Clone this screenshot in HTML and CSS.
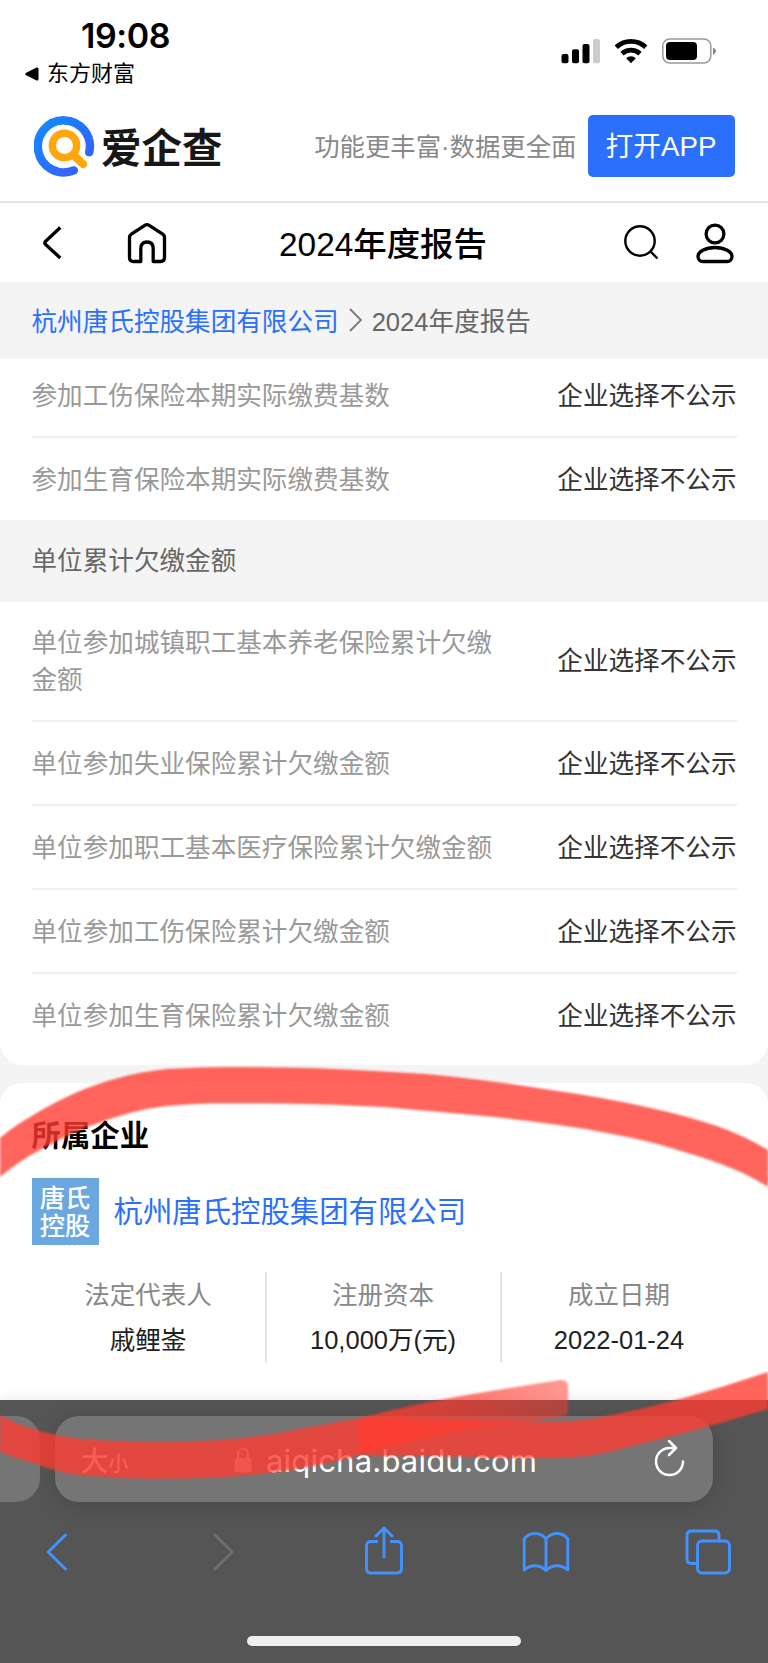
FILE: index.html
```html
<!DOCTYPE html>
<html lang="zh-CN">
<head>
<meta charset="utf-8">
<title>2024年度报告</title>
<link rel="stylesheet" href="styles.css">
</head>
<body>
<div class="screen">
  <div class="status">
    <div class="status-left">
      <div class="time">19:08</div>
      <div class="return"><svg width="14" height="14" viewBox="0 0 14 14"><path d="M1.2 5.7 11.6.6Q13.5 0 13.5 2v10q0 2-1.9 1.4L1.2 8.3Q-.8 7 1.2 5.7z"/></svg><span>东方财富</span></div>
    </div>
    <div class="status-icons">
      <svg width="156" height="28" viewBox="0 0 156 28">
        <rect x="1.5" y="16" width="7" height="9.3" rx="2"/><rect x="12" y="11.3" width="7" height="14" rx="2"/><rect x="22.5" y="6" width="7" height="19.3" rx="2"/><rect x="33" y="1" width="7" height="24.3" rx="2" fill="#ccc"/>
        <g fill="none" stroke="#000" stroke-width="4.8"><path d="M56.3 9.2a21.5 21.5 0 0 1 29.4 0"/><path d="M62 15.6a13.5 13.5 0 0 1 18 0"/></g>
        <path d="M66.2 20.2a7.2 7.2 0 0 1 9.6 0L71 25.2z"/>
        <rect x="102.8" y="1" width="48" height="24" rx="7" fill="none" stroke="#999" stroke-width="1.5"/>
        <rect x="106" y="4" width="31" height="18" rx="4"/><path d="M153 9.5q3 1.2 3 3.7t-3 3.7z" fill="#888"/>
      </svg>
    </div>
  </div>
  <header class="promo">
    <svg class="logo" width="62" height="62" viewBox="0 0 62 62" fill="none" stroke-linecap="round">
      <defs><linearGradient id="ring" x1="0" y1="0" x2="1" y2="1"><stop stop-color="#118bff"/><stop offset="1" stop-color="#3a5bff"/></linearGradient></defs>
      <path d="M55.2 37.2A26 26 0 1 0 39.8 55.4" stroke="url(#ring)" stroke-width="8.5"/>
      <circle cx="30.5" cy="30.5" r="12.2" stroke="#ffa60d" stroke-width="7.4"/><path d="M40.5 41l8.6 8.2" stroke="#ffa60d" stroke-width="8"/>
    </svg>
    <div class="brand">爱企查</div>
    <div class="slogan">功能更丰富·数据更全面</div>
    <div class="open">打开APP</div>
  </header>
  <nav class="nav">
    <svg class="n-back" width="20" height="36" viewBox="0 0 20 36"><path d="M17.3 2.5 2.4 16.5q-1.2 1.4 0 2.8L17.3 33"/></svg>
    <svg class="n-home" width="42" height="42" viewBox="0 0 42 42"><path d="M3.5 15.5q0-2.2 1.8-3.4L18.8 3.3q2.2-1.4 4.4 0l13.5 8.8q1.8 1.2 1.8 3.4v20q0 4-4 4h-7.3V26.5q0-6.5-6.2-6.5t-6.2 6.5v13H7.5q-4 0-4-4z"/></svg>
    <h1>2024年度报告</h1>
    <svg class="n-search" width="38" height="38" viewBox="0 0 38 38"><circle cx="17" cy="17" r="14.7"/><path d="M27.5 27.5l7 7"/></svg>
    <svg class="n-user" width="40" height="42" viewBox="0 0 40 42"><circle cx="20" cy="12" r="8.9"/><path d="M20 25.500c-10 0-17 4.500-17 9 0 3 2 5 5 5h24c3 0 5-2 5-5 0-4.500-7-9-17-9z"/></svg>
  </nav>
  <div class="crumbs"><span class="link">杭州唐氏控股集团有限公司</span><svg width="13" height="24" viewBox="0 0 13 24"><path d="M1 1l11 11L1 23"/></svg><span>2024年度报告</span></div>
  <main>
    <section class="report">
      <div class="row first"><span>参加工伤保险本期实际缴费基数</span><b>企业选择不公示</b></div>
      <div class="row end"><span>参加生育保险本期实际缴费基数</span><b>企业选择不公示</b></div>
      <div class="band">单位累计欠缴金额</div>
      <div class="row tall"><span>单位参加城镇职工基本养老保险累计欠缴金额</span><b>企业选择不公示</b></div>
      <div class="row"><span>单位参加失业保险累计欠缴金额</span><b>企业选择不公示</b></div>
      <div class="row"><span>单位参加职工基本医疗保险累计欠缴金额</span><b>企业选择不公示</b></div>
      <div class="row"><span>单位参加工伤保险累计欠缴金额</span><b>企业选择不公示</b></div>
      <div class="row end"><span>单位参加生育保险累计欠缴金额</span><b>企业选择不公示</b></div>
    </section>
    <section class="company">
      <h2>所属企业</h2>
      <div class="who"><div class="avatar">唐氏<br>控股</div><span>杭州唐氏控股集团有限公司</span></div>
      <div class="facts">
        <div><span>法定代表人</span><b>戚鲤崟</b></div>
        <div><span>注册资本</span><b>10,000万(元)</b></div>
        <div><span>成立日期</span><b>2022-01-24</b></div>
      </div>
    </section>
  </main>
  <footer class="browser">
    <div class="tabs">
      <div class="prev"></div>
      <div class="address">
        <div class="size">大<small>小</small></div>
        <svg class="lock" width="18" height="26" viewBox="0 0 18 26"><rect x=".5" y="11" width="17" height="14.500" rx="2.500" fill="#bbb"/><path d="M4 12V7.500q0-5.500 5-5.500t5 5.500V12" fill="none" stroke="#bbb" stroke-width="2.200"/></svg>
        <div class="url">aiqicha.baidu.com</div>
        <svg class="reload" width="32" height="38" viewBox="0 0 32 38" fill="none" stroke="#fff" stroke-width="2.500" stroke-linecap="round" stroke-linejoin="round"><path d="M29 22.500A13.500 13.500 0 1 1 15.500 9H21.500"/><path d="M15 2l7 7-7 7"/></svg>
      </div>
    </div>
    <div class="tools">
      <svg class="t1" width="22" height="38" viewBox="0 0 22 38"><path d="M19.500 2 2.200 19l17.300 17" stroke-width="3"/></svg>
      <svg class="t2" width="22" height="38" viewBox="0 0 22 38"><path d="M2 2l17.300 17L2 36"/></svg>
      <svg class="t3" width="40" height="50" viewBox="0 0 40 50"><path d="M13 16.500H7q-4.500 0-4.500 4.500v22.500Q2.500 48 7 48h26q4.500 0 4.500-4.500V21q0-4.500-4.500-4.500h-6M20 32V3M12 11l8-8 8 8"/></svg>
      <svg class="t4" width="48" height="42" viewBox="0 0 48 42"><path d="M24 8v31.500M24 8Q20 2.500 13 2.500T2.200 8v31Q7 34.800 13 34.800T24 39.500Q29 34.800 35 34.800T45.800 39V8Q42 2.500 35 2.500T24 8z"/></svg>
      <svg class="t5" width="46" height="46" viewBox="0 0 46 46"><path d="M12 34.500H6.500Q2 34.500 2 30V6.500Q2 2 6.500 2H29.500Q34 2 34 6.500V12"/><rect x="12.500" y="12" width="32" height="32" rx="4.500"/></svg>
    </div>
    <div class="home-bar"></div>
  </footer>
  <svg class="ink" width="768" height="430" viewBox="0 1058 768 430">
    <defs><linearGradient id="fade" gradientUnits="userSpaceOnUse" x1="400" y1="0" x2="570" y2="0"><stop stop-color="#ff3b30" stop-opacity=".79"/><stop offset="1" stop-color="#ff3b30" stop-opacity=".52"/></linearGradient></defs>
    <path fill="#ff3b30" fill-opacity=".79" d="M-4 1141L0 1138Q14 1126 30 1117Q57 1100 87 1088Q108 1080 130 1075Q148 1071 167 1069Q200 1067 233 1067Q310 1067 384 1071.500Q418 1073 451 1076.500Q501 1082 551 1090Q602 1097 651 1108Q687 1116 717 1126Q745 1136 768 1150L772 1152V1190L768 1187Q751 1176 731 1168Q709 1159 684 1152Q651 1141 617 1135Q584 1128 551 1124Q501 1117 451 1113L384 1107Q333 1104 283 1103.500H207Q187 1104 167 1106Q148 1108 130 1113Q108 1119 87 1127Q63 1137 40 1150Q19 1161 0 1177L-4 1180Z"/>
    <path fill="url(#fade)" d="M-4 1413L0 1415Q15 1424 30 1428Q55 1436 80 1439Q118 1442 157 1442Q202 1442 243 1438Q272 1435 300 1429L360 1418Q372 1415 384 1412Q425 1402 467 1395Q515 1387 561 1380Q568 1380 568 1386V1411Q568 1416 560 1417L534 1421L467 1429Q425 1437 384 1448Q359 1456 333 1462Q291 1471 250 1475Q225 1478 200 1478Q177 1479 153 1479Q115 1478 77 1475Q54 1471 33 1463Q15 1458 0 1452L-4 1450Z"/>
    <path fill="#ff3b30" fill-opacity=".79" d="M358 1422Q359 1418 365 1418H384L434 1420Q484 1421 534 1421.500Q553 1422 571 1421Q595 1419 617 1414Q651 1407 684 1398Q727 1386 768 1372L772 1371V1408L768 1409Q726 1422 684 1433L617 1450Q594 1456 571 1457.500Q528 1458.500 484 1457.500L434 1456H384Q368 1456 362 1454Q358 1452 358 1448Z"/>
  </svg>
</div>
</body>
</html>
```
FILE: styles.css
```css
* { box-sizing: border-box; }
body { margin: 0; font-family: "Liberation Sans", "Noto Sans CJK SC", sans-serif; background: #f4f4f4; }
svg { display: block; flex: none; }
h1, h2 { margin: 0; font-weight: 500; }
b { font-weight: 400; }
.screen { position: relative; width: 768px; height: 1663px; overflow: hidden; }
.status { height: 101px; background: #fff; display: flex; justify-content: space-between; padding: 15px 52px 0 25px; }
.time { font: 600 34px/42px Inter, sans-serif; letter-spacing: -.4px; padding-left: 56px; }
.return { display: flex; align-items: center; gap: 8px; height: 34px; font-size: 22px; line-height: 34px; }
.status-icons { padding-top: 23px; }
.promo { height: 102px; background: #fff; border-bottom: 2px solid #e6e6e6; display: flex; align-items: center; padding: 0 33.500px 10px 34px; }
.logo { margin-top: 0; }
.brand { font: 700 40.500px/60px "Noto Sans CJK SC", sans-serif; color: #171717; margin: -1px 0 0 5px; width: 124px; white-space: nowrap; }
.slogan { margin-left: auto; margin-right: 11px; margin-top: -3px; font-size: 25.400px; color: #888; white-space: nowrap; }
.open { width: 147px; height: 62px; border-radius: 5px; background: #2a70fc; color: #fff; font-size: 27.700px; line-height: 64px; text-align: center; white-space: nowrap; }
.nav { height: 79px; background: #fff; display: flex; align-items: center; padding-left: 43px; }
.nav svg { fill: none; stroke: #000; stroke-width: 3.300; stroke-linejoin: round; }
.n-home { margin-left: 63px; }
.nav h1 { font-size: 33.400px; line-height: 50px; margin: 5px 0 0 111px; width: 209px; white-space: nowrap; }
.nav .n-search { margin-left: 135px; stroke-width: 2.400; }
.n-user { margin-left: 33.500px; }
.crumbs { height: 77px; display: flex; align-items: center; padding: 0 0 3px 31.500px; font-size: 25.600px; color: #666; white-space: nowrap; }
.crumbs .link { color: #2a70fc; }
.crumbs svg { margin: 2px 10px 0; fill: none; stroke: #777; stroke-width: 1.800; }
.report { height: 706px; background: #fff; border-radius: 0 0 22px 22px; font-size: 25.600px; line-height: 37.600px; }
.row { height: 84px; margin: 0 31.500px; padding-top: 3px; border-bottom: 2px solid #eee; display: flex; align-items: center; justify-content: space-between; color: #999; }
.row b { color: #333; white-space: nowrap; }
.row span { width: 462px; }
.first { height: 79px; padding: 0 0 2px; }
.end { height: 82px; border: 0; }
.tall { height: 120.500px; }
.band { height: 81.500px; padding-left: 31.500px; background: #f4f4f4; color: #666; line-height: 83px; }
.company { height: 330px; margin-top: 18px; padding: 31px 31.500px 0; background: #fff; border-radius: 22px 22px 0 0; }
.company h2 { height: 44px; font-size: 29.400px; line-height: 44px; font-weight: 700; }
.who { display: flex; align-items: center; gap: 15px; margin-top: 20px; color: #2a70fc; font-size: 29.400px; line-height: 67px; }
.avatar { width: 67px; height: 67px; background: #6ba8e0; color: #fff; font-size: 25.300px; line-height: 28px; text-align: center; padding-top: 6px; font-weight: 500; }
.facts { display: grid; grid-template-columns: repeat(3, 1fr); height: 91px; margin-top: 27px; text-align: center; font-size: 25.500px; }
.facts div { display: flex; flex-direction: column; border-right: 2px solid #e4e4e4; }
.facts div:last-child { border: 0; }
.facts span { color: #888; line-height: 47px; }
.facts b { color: #1f1f1f; line-height: 43px; }
.browser { position: absolute; left: 0; top: 1400px; width: 768px; height: 263px; background: #555; box-shadow: 0 -2px 12px rgba(0,0,0,.08); }
.tabs { display: flex; gap: 15.500px; padding-top: 16px; height: 102px; }
.prev { width: 39.500px; height: 86px; border-radius: 0 24px 24px 0; background: #757575; }
.address { width: 657.500px; height: 86px; border-radius: 24px; background: #757575; box-shadow: 0 3px 20px rgba(0,0,0,.16); display: flex; align-items: center; color: #fff; }
.size { width: 50px; margin: 1px 0 0 26px; color: #ddd; font-size: 27px; font-weight: 500; white-space: nowrap; }
.size small { font-size: 20.500px; }
.lock { margin: 1px 0 0 103px; }
.url { font: 400 31px/40px Inter, sans-serif; letter-spacing: .2px; margin: 3px 0 0 14px; width: 273px; white-space: nowrap; }
.reload { margin-left: 115px; margin-top: -3px; }
.tools { display: flex; align-items: center; height: 100px; padding-left: 46px; }
.tools svg { fill: none; stroke: #4192ff; stroke-width: 2.900; stroke-linejoin: round; stroke-linecap: round; }
.tools .t2 { margin-left: 145px; stroke: #6f6f6f; }
.t3 { margin-left: 129px; margin-top: -5px; }
.t4 { margin-left: 118px; }
.t5 { margin-left: 115px; margin-top: -1px; }
.home-bar { width: 274px; height: 10px; margin: 34px auto 0; border-radius: 5px; background: #eee; }
.ink { position: absolute; left: 0; top: 1058px; filter: blur(.8px); pointer-events: none; }
```
